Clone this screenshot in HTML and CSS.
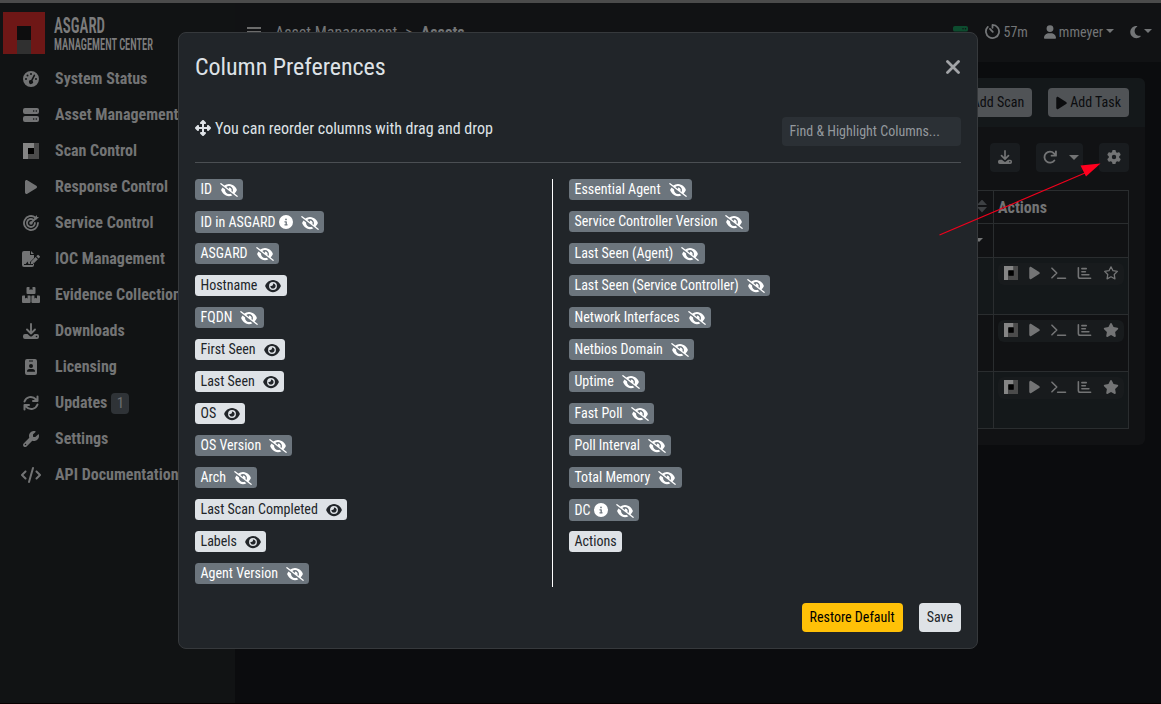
FILE: index.html
```html
<!DOCTYPE html>
<html lang="en">
<head>
<meta charset="utf-8">
<title>ASGARD Management Center</title>
<link rel="stylesheet" href="styles.css">
</head>
<body>
<svg class="sprite" aria-hidden="true">
  <symbol id="hide" viewBox="0 0 640 512"><path d="M38.8 5.1C28.4-3.1 13.3-1.2 5.1 9.2S-1.2 34.7 9.2 42.9l592 464c10.4 8.2 25.5 6.3 33.7-4.1s6.3-25.5-4.1-33.7L525.6 386.7c39.6-40.6 66.4-86.1 79.9-118.4c3.3-7.9 3.3-16.7 0-24.6c-14.9-35.7-46.2-87.7-93-131.1C465.5 68.8 400.8 32 320 32c-68.2 0-125 26.3-169.3 60.8L38.8 5.1zM223.1 149.5C248.6 126.2 282.7 112 320 112c79.5 0 144 64.5 144 144c0 24.9-6.3 48.3-17.4 68.7L408 294.5c8.4-19.3 10.6-41.4 4.8-63.3c-11.1-41.5-47.8-69.4-88.6-71.1c-5.8-.2-9.2 6.1-7.4 11.7c2.1 6.4 3.3 13.2 3.3 20.3c0 10.2-2.4 19.8-6.6 28.3l-90.3-70.8zM373 389.9c-16.4 6.5-34.3 10.1-53 10.1c-79.5 0-144-64.5-144-144c0-6.9 .5-13.6 1.4-20.2L83.1 161.5C60.3 191.2 44 220.8 34.5 243.7c-3.3 7.9-3.3 16.7 0 24.6c14.9 35.7 46.2 87.7 93 131.1C174.5 443.2 239.2 480 320 480c47.8 0 89.9-12.9 126.2-32.5L373 389.9z"/></symbol>
  <symbol id="show" viewBox="0 0 576 512"><path d="M288 32c-80.8 0-145.5 36.8-192.6 80.6C48.6 156 17.3 208 2.5 243.7c-3.3 7.9-3.3 16.7 0 24.6C17.3 304 48.6 356 95.4 399.4C142.5 443.2 207.2 480 288 480s145.5-36.8 192.6-80.6c46.8-43.5 78.1-95.4 93-131.1c3.3-7.9 3.3-16.7 0-24.6c-14.9-35.7-46.2-87.7-93-131.1C433.5 68.8 368.8 32 288 32zM144 256a144 144 0 1 1 288 0 144 144 0 1 1 -288 0zm144-64c0 35.3-28.7 64-64 64c-7.1 0-13.9-1.2-20.3-3.3c-5.5-1.8-11.9 1.6-11.7 7.4c.3 6.9 1.3 13.8 3.2 20.7c13.7 51.2 66.4 81.6 117.6 67.9s81.6-66.4 67.9-117.6c-11.1-41.5-47.8-69.4-88.6-71.1c-5.8-.2-9.2 6.1-7.4 11.7c2.1 6.4 3.3 13.2 3.3 20.3z"/></symbol>
  <symbol id="info" viewBox="0 0 512 512"><path d="M256 512A256 256 0 1 0 256 0a256 256 0 1 0 0 512zM216 336h24V272H216c-13.3 0-24-10.7-24-24s10.7-24 24-24h48c13.3 0 24 10.7 24 24v88h8c13.3 0 24 10.7 24 24s-10.7 24-24 24H216c-13.3 0-24-10.7-24-24s10.7-24 24-24zm40-208a32 32 0 1 1 0 64 32 32 0 1 1 0-64z"/></symbol>
  <symbol id="gear" viewBox="0 0 512 512"><path d="M495.9 166.6c3.2 8.7 .5 18.4-6.4 24.6l-43.3 39.4c1.1 8.3 1.7 16.8 1.7 25.4s-.6 17.1-1.7 25.4l43.3 39.4c6.9 6.2 9.6 15.9 6.4 24.6c-4.4 11.9-9.7 23.3-15.8 34.3l-4.7 8.1c-6.6 11-14 21.4-22.1 31.2c-5.9 7.2-15.7 9.6-24.5 6.8l-55.7-17.7c-13.4 10.3-28.2 18.9-44 25.4l-12.5 57.1c-2 9.1-9 16.3-18.2 17.8c-13.8 2.3-28 3.5-42.5 3.5s-28.7-1.2-42.5-3.5c-9.2-1.5-16.2-8.7-18.2-17.8l-12.5-57.1c-15.8-6.5-30.6-15.1-44-25.4L83.1 425.9c-8.8 2.8-18.6 .3-24.5-6.8c-8.1-9.8-15.5-20.2-22.1-31.2l-4.7-8.1c-6.1-11-11.4-22.4-15.8-34.3c-3.2-8.7-.5-18.4 6.4-24.6l43.3-39.4C64.6 273.1 64 264.6 64 256s.6-17.1 1.7-25.4L22.4 191.2c-6.9-6.2-9.6-15.9-6.4-24.6c4.4-11.9 9.7-23.3 15.8-34.3l4.7-8.1c6.6-11 14-21.4 22.1-31.2c5.9-7.2 15.7-9.6 24.5-6.8l55.7 17.7c13.4-10.3 28.2-18.9 44-25.4l12.5-57.1c2-9.1 9-16.3 18.2-17.8C227.3 1.2 241.5 0 256 0s28.7 1.2 42.5 3.5c9.2 1.5 16.2 8.7 18.2 17.8l12.5 57.1c15.8 6.5 30.6 15.1 44 25.4l55.7-17.7c8.8-2.8 18.6-.3 24.5 6.8c8.1 9.8 15.5 20.2 22.1 31.2l4.7 8.1c6.1 11 11.4 22.4 15.8 34.3zM256 336a80 80 0 1 0 0-160 80 80 0 1 0 0 160z"/></symbol>
  <symbol id="play" viewBox="0 0 384 512"><path d="M73 39c-14.8-9.1-33.4-9.4-48.5-.9S0 62.6 0 80V432c0 17.4 9.4 33.4 24.5 41.9s33.7 8.1 48.5-.9L361 297c14.3-8.7 23-24.2 23-41s-8.7-32.2-23-41L73 39z"/></symbol>
  <symbol id="star" viewBox="0 0 576 512"><path d="M316.9 18C311.6 7 300.4 0 288.1 0s-23.4 7-28.8 18L195 150.3 51.4 171.5c-12 1.8-22 10.2-25.7 21.7s-.7 24.2 7.9 32.7L137.8 329 113.2 474.7c-2 12 3 24.2 12.9 31.3s23 8 33.8 2.3l128.3-68.5 128.3 68.5c10.8 5.7 23.9 4.9 33.8-2.3s14.9-19.3 12.9-31.3L438.5 329 542.7 225.9c8.6-8.5 11.7-21.2 7.9-32.7s-13.7-19.9-25.7-21.7L381.2 150.3 316.9 18z"/></symbol>
  <symbol id="star-o" viewBox="0 0 576 512"><path d="M288 30L361 172 520 196 406 309 432 468 288 392 144 468 170 309 56 196 215 172z" fill="none" stroke="currentColor" stroke-width="48" stroke-linejoin="round"/></symbol>
  <symbol id="wrench" viewBox="0 0 512 512"><path d="M352 320c88.4 0 160-71.6 160-160c0-15.3-2.2-30.1-6.2-44.2c-3.1-10.8-16.4-13.2-24.3-5.3l-76.8 76.8c-3 3-7.1 4.7-11.3 4.7H336c-8.8 0-16-7.2-16-16V118.6c0-4.2 1.7-8.3 4.7-11.3l76.8-76.8c7.9-7.9 5.4-21.2-5.3-24.3C382.1 2.2 367.3 0 352 0C263.6 0 192 71.6 192 160c0 19.1 3.4 37.5 9.5 54.5L19.9 396.1C7.2 408.8 0 426.1 0 444.1C0 481.6 30.4 512 67.9 512c18 0 35.3-7.2 48-19.9L297.5 310.5c17 6.2 35.4 9.5 54.5 9.5zM80 408a24 24 0 1 1 0 48 24 24 0 1 1 0-48z"/></symbol>
  <symbol id="code" viewBox="0 0 640 512"><path d="M392.8 1.2c-17-4.9-34.7 5-39.6 22l-128 448c-4.9 17 5 34.7 22 39.6s34.7-5 39.6-22l128-448c4.9-17-5-34.7-22-39.6zm80.6 120.1c-12.5 12.5-12.5 32.8 0 45.3L562.7 256l-89.4 89.4c-12.5 12.5-12.5 32.8 0 45.3s32.8 12.5 45.3 0l112-112c12.5-12.5 12.5-32.8 0-45.3l-112-112c-12.5-12.5-32.8-12.5-45.3 0zm-306.7 0c-12.5-12.5-32.8-12.5-45.3 0l-112 112c-12.5 12.5-12.5 32.8 0 45.3l112 112c12.5 12.5 32.8 12.5 45.3 0s12.5-32.8 0-45.3L77.3 256l89.4-89.4c12.5-12.5 12.5-32.8 0-45.3z"/></symbol>
  <symbol id="user" viewBox="0 0 448 512"><path d="M224 256A128 128 0 1 0 224 0a128 128 0 1 0 0 256zm-45.7 48C79.8 304 0 383.8 0 482.3C0 498.7 13.3 512 29.7 512H418.3c16.4 0 29.7-13.3 29.7-29.7C448 383.8 368.2 304 269.7 304H178.3z"/></symbol>
  <symbol id="moon" viewBox="0 0 384 512"><path d="M223.5 32C100 32 0 132.3 0 256S100 480 223.5 480c60.6 0 115.5-24.2 155.8-63.4c5-4.9 6.3-12.5 3.1-18.7s-10.1-9.7-17-8.5c-9.8 1.7-19.8 2.6-30.1 2.6c-96.9 0-175.5-78.8-175.5-176c0-65.8 36-123.1 89.3-153.3c6.1-3.5 9.2-10.5 7.7-17.3s-7.3-11.9-14.3-12.5c-6.3-.5-12.6-.8-19-.8z"/></symbol>
  <symbol id="move" viewBox="0 0 512 512"><path d="M278.6 9.4c-12.5-12.5-32.8-12.5-45.3 0l-64 64c-9.2 9.2-11.9 22.9-6.9 34.9s16.6 19.8 29.6 19.8h32v96H128V192c0-12.9-7.8-24.6-19.8-29.6s-25.7-2.2-34.9 6.9l-64 64c-12.5 12.5-12.5 32.8 0 45.3l64 64c9.2 9.2 22.9 11.9 34.9 6.9s19.8-16.6 19.8-29.6V288h96v96H192c-12.9 0-24.6 7.8-29.6 19.8s-2.2 25.7 6.9 34.9l64 64c12.5 12.5 32.8 12.5 45.3 0l64-64c9.2-9.2 11.9-22.9 6.9-34.9s-16.6-19.8-29.6-19.8H288V288h96v32c0 12.9 7.8 24.6 19.8 29.6s25.7 2.2 34.9-6.9l64-64c12.5-12.5 12.5-32.8 0-45.3l-64-64c-9.2-9.2-22.9-11.9-34.9-6.9s-19.8 16.6-19.8 29.6v32H288V128h32c12.9 0 24.6-7.8 29.6-19.8s2.2-25.7-6.9-34.9l-64-64z"/></symbol>
  <symbol id="gauge" viewBox="0 0 16 16"><path fill-rule="evenodd" d="M8 0a8 8 0 1 1 0 16A8 8 0 0 1 8 0zM8 2a1 1 0 1 0 0 2 1 1 0 0 0 0-2zM4.5 3.5a1 1 0 1 0 0 2 1 1 0 0 0 0-2zM3 7a1 1 0 1 0 0 2 1 1 0 0 0 0-2zM13 7a1 1 0 1 0 0 2 1 1 0 0 0 0-2zM10.8 3.7L8.1 9A2 2 0 1 0 9.5 9.7L12.2 4.4Q11.8 3 10.8 3.7z"/></symbol>
  <symbol id="server" viewBox="0 0 16 16"><path fill-rule="evenodd" d="M2 1h12a2 2 0 0 1 2 2v2a2 2 0 0 1-2 2H2a2 2 0 0 1-2-2V3a2 2 0 0 1 2-2zM10.7 3.2a.8.8 0 1 0 0 1.6.8.8 0 0 0 0-1.6zM13.3 3.2a.8.8 0 1 0 0 1.6.8.8 0 0 0 0-1.6zM2 9h12a2 2 0 0 1 2 2v2a2 2 0 0 1-2 2H2a2 2 0 0 1-2-2v-2a2 2 0 0 1 2-2zM10.7 11.2a.8.8 0 1 0 0 1.6.8.8 0 0 0 0-1.6zM13.3 11.2a.8.8 0 1 0 0 1.6.8.8 0 0 0 0-1.6z"/></symbol>
  <symbol id="scan" viewBox="0 0 16 16"><path d="M0 0h11v5H5v11H0z" fill="#858585"/><path d="M11 0h5v16H5v-5h6z" fill="#4b4b4b"/><path d="M5 5h6v6H5z" fill="#000"/></symbol>
  <symbol id="target" viewBox="0 0 16 16"><g fill="none" stroke="currentColor" stroke-width="1.8" stroke-linecap="round"><path d="M12.3 2.5A7 7 0 1 0 15 8"/><path d="M10 4.6A4 4 0 1 0 11.9 8"/><path d="M8 8l5-5"/></g><circle cx="8" cy="8" r="1.7"/><path d="M11.5 2.5L14 0v2h2l-2.5 2.5h-2z"/></symbol>
  <symbol id="sign" viewBox="0 0 18 16"><path fill-rule="evenodd" d="M2 0h6v4h4v3L8 11v2H6.500l-1-2.500L3.800 13H2v1h9v-1.500l1-1V14a2 2 0 0 1-2 2H2a2 2 0 0 1-2-2V2a2 2 0 0 1 2-2zM9 0l3 3H9zM15.300 4.200q.7-.7 1.400 0l.9.9q.7.7 0 1.400l-1 1-2.300-2.300zM13.600 5.900l2.300 2.300-4.500 4.500-2.800.6.600-2.900z"/></symbol>
  <symbol id="boxes" viewBox="0 0 18 16"><path d="M5.500 0h2v3l1.500-.8 1.500.8V0h2A1 1 0 0 1 13.500 1v5a1 1 0 0 1-1 1h-7a1 1 0 0 1-1-1V1a1 1 0 0 1 1-1zM1 8.500h2v3l1.300-.8 1.300.8v-3h2a1 1 0 0 1 1 1V15a1 1 0 0 1-1 1H1a1 1 0 0 1-1-1V9.500a1 1 0 0 1 1-1zM10.400 8.500h2v3l1.300-.8 1.300.8v-3h2a1 1 0 0 1 1 1V15a1 1 0 0 1-1 1h-6.600a1 1 0 0 1-1-1V9.500a1 1 0 0 1 1-1z"/></symbol>
  <symbol id="down" viewBox="0 0 16 16"><path d="M8 1v9M4 6.500l4 4 4-4" fill="none" stroke="currentColor" stroke-width="1.900" stroke-linecap="round" stroke-linejoin="round"/><path fill-rule="evenodd" d="M2 11h2.500L7 13.200q1 .8 2 0L11.500 11H14a2 2 0 0 1 2 2v1a2 2 0 0 1-2 2H2a2 2 0 0 1-2-2v-1a2 2 0 0 1 2-2zM13.500 12.700a.8.8 0 1 0 0 1.600.8.8 0 0 0 0-1.600z"/></symbol>
  <symbol id="badge" viewBox="0 0 12 16"><path fill-rule="evenodd" d="M2 0h8a2 2 0 0 1 2 2v12a2 2 0 0 1-2 2H2a2 2 0 0 1-2-2V2a2 2 0 0 1 2-2zM4 1.500v1h4v-1zM6 5a2 2 0 1 0 0 4 2 2 0 0 0 0-4zM4.800 10A2.700 2.700 0 0 0 2 12.800h8A2.700 2.700 0 0 0 7.200 10z"/></symbol>
  <symbol id="sync" viewBox="0 0 16 16"><g fill="none" stroke="currentColor" stroke-width="2" stroke-linecap="round" stroke-linejoin="round"><path d="M1.500 6.500C3 2 9 0 13 4.500M14.500 9.500C13 14 7 16 3 11.500M14.500 1.500v4.500H10M1.500 14.500V10H6"/></g></symbol>
  <symbol id="redo" viewBox="0 0 16 16"><path d="M13 12A6.300 6.300 0 1 1 12.500 3.800L14.500 6M14.800 1.500v5h-5" fill="none" stroke="currentColor" stroke-width="2.100" stroke-linecap="round" stroke-linejoin="round"/></symbol>
  <symbol id="timer" viewBox="0 0 16 16"><path d="M8 1v3M8 1A7 7 0 1 1 3 3.100M5.300 5.300L8.300 8.300" fill="none" stroke="currentColor" stroke-width="1.900" stroke-linecap="round"/></symbol>
  <symbol id="term" viewBox="0 0 18 16"><path d="M1.500 2.500L7 8l-5.500 5.500M8 14h9" fill="none" stroke="currentColor" stroke-width="1.800" stroke-linecap="round" stroke-linejoin="round"/></symbol>
  <symbol id="chart" viewBox="0 0 16 16"><path d="M1 2v10q0 2 2 2h12M5 3h5M5 6.500h4M5 10h8" fill="none" stroke="currentColor" stroke-width="1.800" stroke-linecap="round"/></symbol>
</svg>

<div class="topline"></div>
<div class="app">
  <aside class="side">
    <div class="brand">
      <svg class="mark" viewBox="0 0 42 42"><path fill="#6e1716" d="M0 0h42v42H28V14H14v28H0z"/><path fill="#0d0d0e" d="M14 14h14v14H14z"/><path fill="#303030" d="M14 28h14v14H14z"/></svg>
      <svg class="word" viewBox="0 0 110 42"><text class="w1" x="1" y="21" textLength="51" lengthAdjust="spacingAndGlyphs">ASGARD</text><text class="w2" x="1" y="37.700" textLength="99" lengthAdjust="spacingAndGlyphs">MANAGEMENT CENTER</text></svg>
    </div>
    <nav class="nav">
      <a><i><svg width="16" height="16"><use href="#gauge"/></svg></i>System Status</a>
      <a><i><svg width="16" height="16"><use href="#server"/></svg></i>Asset Management</a>
      <a><i><svg width="16" height="16"><use href="#scan"/></svg></i>Scan Control</a>
      <a><i><svg width="12" height="16"><use href="#play"/></svg></i>Response Control</a>
      <a><i><svg width="16" height="16"><use href="#target"/></svg></i>Service Control</a>
      <a><i><svg width="18" height="16"><use href="#sign"/></svg></i>IOC Management</a>
      <a><i><svg width="18" height="16"><use href="#boxes"/></svg></i>Evidence Collection</a>
      <a><i><svg width="16" height="16"><use href="#down"/></svg></i>Downloads</a>
      <a><i><svg width="12" height="16"><use href="#badge"/></svg></i>Licensing</a>
      <a><i><svg width="16" height="16"><use href="#sync"/></svg></i>Updates<b class="count">1</b></a>
      <a><i><svg width="16" height="16"><use href="#wrench"/></svg></i>Settings</a>
      <a><i><svg width="20" height="16"><use href="#code"/></svg></i>API Documentation</a>
    </nav>
  </aside>
  <main class="main">
    <header class="bar">
      <span class="burger"></span>
      <span class="crumb">Asset Management</span><span class="sep">&gt;</span><b class="crumb">Assets</b>
      <div class="tools">
        <svg class="green" width="15" height="15"><use href="#server"/></svg>
        <span class="tool t-time"><svg width="15" height="15"><use href="#timer"/></svg>57m</span>
        <span class="tool t-user"><svg width="12" height="14"><use href="#user"/></svg>mmeyer<em class="caret"></em></span>
        <span class="tool t-moon"><svg width="11" height="14"><use href="#moon"/></svg><em class="caret"></em></span>
      </div>
    </header>
    <section class="card">
      <div class="card-head"><button class="btn grey">Add Scan</button><button class="btn grey"><svg width="11" height="14"><use href="#play"/></svg>Add Task</button></div>
      <div class="card-body">
        <div class="actions">
          <span class="sq"><svg width="14" height="14"><use href="#down"/></svg></span>
          <span class="sq wide"><svg width="14" height="14"><use href="#redo"/></svg><em class="caret"></em></span>
          <span class="sq"><svg width="14" height="14"><use href="#gear"/></svg></span>
        </div>
        <div class="table">
          <div class="row head"><div class="cell"><span class="sort"></span></div><div class="cell">Actions</div></div>
          <div class="row filter"><div class="cell"><em class="caret"></em></div><div class="cell"></div></div>
          <div class="row alt"><div class="cell"></div><div class="cell"><div class="ops"><svg width="14" height="14"><use href="#scan"/></svg><svg width="11" height="14"><use href="#play"/></svg><svg width="17" height="14"><use href="#term"/></svg><svg class="ch" width="15" height="14"><use href="#chart"/></svg><svg width="16" height="14"><use href="#star-o"/></svg></div></div></div>
          <div class="row"><div class="cell"></div><div class="cell"><div class="ops"><svg width="14" height="14"><use href="#scan"/></svg><svg width="11" height="14"><use href="#play"/></svg><svg width="17" height="14"><use href="#term"/></svg><svg class="ch" width="15" height="14"><use href="#chart"/></svg><svg width="16" height="14"><use href="#star"/></svg></div></div></div>
          <div class="row alt"><div class="cell"></div><div class="cell"><div class="ops"><svg width="14" height="14"><use href="#scan"/></svg><svg width="11" height="14"><use href="#play"/></svg><svg width="17" height="14"><use href="#term"/></svg><svg class="ch" width="15" height="14"><use href="#chart"/></svg><svg width="16" height="14"><use href="#star"/></svg></div></div></div>
        </div>
      </div>
    </section>
  </main>
</div>

<div class="modal">
  <div class="m-head"><h1>Column Preferences</h1><svg width="14" height="14" viewBox="0 0 14 14"><path d="M1.500 1.500l11 11M12.500 1.500l-11 11" stroke="#a2a4a7" stroke-width="2.800" stroke-linecap="round"/></svg></div>
  <div class="m-sub"><p><svg width="16" height="16"><use href="#move"/></svg>You can reorder columns with drag and drop</p><div class="find">Find &amp; Highlight Columns...</div></div>
  <div class="cols">
    <div class="col">
      <div class="slot"><span class="pill off">ID<svg class="eye" width="18" height="14"><use href="#hide"/></svg></span></div>
      <div class="slot"><span class="pill off tall">ID in ASGARD<svg class="inf" width="14" height="14"><use href="#info"/></svg><svg class="eye" width="18" height="14"><use href="#hide"/></svg></span></div>
      <div class="slot"><span class="pill off">ASGARD<svg class="eye" width="18" height="14"><use href="#hide"/></svg></span></div>
      <div class="slot"><span class="pill">Hostname<svg class="eye" width="16" height="14"><use href="#show"/></svg></span></div>
      <div class="slot"><span class="pill off">FQDN<svg class="eye" width="18" height="14"><use href="#hide"/></svg></span></div>
      <div class="slot"><span class="pill">First Seen<svg class="eye" width="16" height="14"><use href="#show"/></svg></span></div>
      <div class="slot"><span class="pill">Last Seen<svg class="eye" width="16" height="14"><use href="#show"/></svg></span></div>
      <div class="slot"><span class="pill">OS<svg class="eye" width="16" height="14"><use href="#show"/></svg></span></div>
      <div class="slot"><span class="pill off">OS Version<svg class="eye" width="18" height="14"><use href="#hide"/></svg></span></div>
      <div class="slot"><span class="pill off">Arch<svg class="eye" width="18" height="14"><use href="#hide"/></svg></span></div>
      <div class="slot"><span class="pill">Last Scan Completed<svg class="eye" width="16" height="14"><use href="#show"/></svg></span></div>
      <div class="slot"><span class="pill">Labels<svg class="eye" width="16" height="14"><use href="#show"/></svg></span></div>
      <div class="slot"><span class="pill off">Agent Version<svg class="eye" width="18" height="14"><use href="#hide"/></svg></span></div>
    </div>
    <div class="col second">
      <div class="slot"><span class="pill off">Essential Agent<svg class="eye" width="18" height="14"><use href="#hide"/></svg></span></div>
      <div class="slot"><span class="pill off">Service Controller Version<svg class="eye" width="18" height="14"><use href="#hide"/></svg></span></div>
      <div class="slot"><span class="pill off">Last Seen (Agent)<svg class="eye" width="18" height="14"><use href="#hide"/></svg></span></div>
      <div class="slot"><span class="pill off">Last Seen (Service Controller)<svg class="eye" width="18" height="14"><use href="#hide"/></svg></span></div>
      <div class="slot"><span class="pill off">Network Interfaces<svg class="eye" width="18" height="14"><use href="#hide"/></svg></span></div>
      <div class="slot"><span class="pill off">Netbios Domain<svg class="eye" width="18" height="14"><use href="#hide"/></svg></span></div>
      <div class="slot"><span class="pill off">Uptime<svg class="eye" width="18" height="14"><use href="#hide"/></svg></span></div>
      <div class="slot"><span class="pill off">Fast Poll<svg class="eye" width="18" height="14"><use href="#hide"/></svg></span></div>
      <div class="slot"><span class="pill off">Poll Interval<svg class="eye" width="18" height="14"><use href="#hide"/></svg></span></div>
      <div class="slot"><span class="pill off">Total Memory<svg class="eye" width="18" height="14"><use href="#hide"/></svg></span></div>
      <div class="slot"><span class="pill off tall">DC<svg class="inf" width="14" height="14"><use href="#info"/></svg><svg class="eye" width="18" height="14"><use href="#hide"/></svg></span></div>
      <div class="slot"><span class="pill">Actions</span></div>
    </div>
  </div>
  <div class="m-foot"><button class="btn gold">Restore Default</button><button class="btn light">Save</button></div>
</div>

<svg class="pointer" width="170" height="80" viewBox="0 0 170 80"><path d="M4.500 75L150 13" stroke="#f0001c" stroke-width="1.200"/><path d="M165.500 3.500L145.500 5.500L151 16.500z" fill="#ff001e"/></svg>
</body>
</html>
```
FILE: styles.css
```css
* { box-sizing: border-box; }
html, body { margin: 0; height: 704px; overflow: hidden; }
body {
  background: #0b0c0e;
  color: #dee2e6;
  font-family: "Roboto Condensed", Roboto, sans-serif;
  font-stretch: 75%;
  font-size: 16px;
  line-height: 24px;
}
svg { display: block; flex: none; fill: currentColor; }
.sprite { position: absolute; width: 0; height: 0; }
h1, p { margin: 0; font-weight: 400; }
button { font: inherit; border: 0; }

.topline { height: 3px; background: #4b4b4b; }
.app { display: flex; height: 701px; border-bottom: 1px solid #080000; }
.side { width: 235px; background: #111314; color: #737475; }
.brand { display: flex; gap: 8px; padding: 9px 0 0 3px; }
.mark { width: 42px; height: 42px; }
.word { width: 110px; height: 42px; overflow: visible; fill: #7c7c7c; font-weight: 600; }
.w1 { font-size: 22px; }
.w2 { font-size: 16.5px; }
.nav { display: flex; flex-direction: column; padding-top: 7px; font-weight: 700; }
.nav a { display: flex; align-items: center; height: 36px; padding-left: 20px; white-space: nowrap; }
.nav i { display: flex; justify-content: center; width: 22px; margin: 0 13px 1px 0; }
.count { width: 18px; height: 21px; margin: 1px 0 0 4px; border-radius: 4px; background: #2f3337; color: #6b6e70; font-weight: 400; font-size: 15px; line-height: 21px; text-align: center; }

.main { flex: 1; }
.bar { display: flex; align-items: center; height: 59px; padding: 0 9px 0 12px; background: #111214; color: #737577; }
.burger { width: 14px; height: 11px; margin-right: 14px; border: solid #6b6b6b; border-width: 2px 0; background: linear-gradient(#6b6b6b, #6b6b6b) 0 2px / 14px 2px no-repeat; }
.sep { margin: 0 8px; }
.tools { display: flex; align-items: center; margin: 0 0 2px auto; font-size: 14px; }
.green { margin: 1px 17px 0 0; color: #0d4c2f; }
.tool { display: flex; align-items: center; gap: 3px; }
.t-time, .t-user { margin-right: 16px; }
.caret { border: 4px solid transparent; border-top-color: currentColor; border-bottom: 0; margin-bottom: 2px; }

.card { margin: 16px 16px 0; height: 367px; border-radius: 6px; background: #111214; overflow: hidden; }
.card-head { display: flex; justify-content: flex-end; gap: 16px; height: 49px; padding: 10px 16px; background: #14181a; }
.btn { display: flex; align-items: center; gap: 3px; height: 29px; padding: 0 8px; border-radius: 4px; font-size: 14px; line-height: 29px; }
.grey { background: #505356; color: #0b0c0e; }
.card-body { padding: 16px; }
.actions { display: flex; justify-content: flex-end; gap: 16px; color: #737475; }
.sq { display: flex; align-items: center; justify-content: center; width: 30px; height: 29px; padding-bottom: 1px; border-radius: 4px; background: #191c1f; }
.wide { width: 47px; gap: 12px; padding-left: 3px; }
.wide .caret { border-width: 5px 5px 0; margin: 1px 0 0; }
.table { margin-top: 18px; border: 1px solid #2a2d2f; border-bottom: 0; color: #737475; }
.row { display: grid; grid-template-columns: 1fr 135px; height: 57px; border-bottom: 1px solid #2a2d2f; }
.cell + .cell { border-left: 1px solid #2a2d2f; padding: 5px 4px; }
.head { height: 33px; font-weight: 700; }
.filter { height: 34px; }
.alt { background: #14181a; }
.head .cell:first-child, .filter .cell:first-child { display: flex; align-items: center; justify-content: flex-end; padding-right: 6px; }
.filter .cell:first-child { padding-right: 10px; }
.head .cell + .cell { padding: 5px 4px 3px; }
.sort { width: 10px; height: 13px; margin-top: -2px; background: #3d4043; clip-path: polygon(50% 0, 100% 42%, 0 42%, 50% 0, 50% 100%, 0 58%, 100% 58%, 50% 100%); }
.ops { display: flex; align-items: center; height: 22px; width: 126px; padding: 0 5px 2px 6px; justify-content: space-between; border-radius: 6px; background: #181b1d; }
.ch { margin: 0 1px 0 -1px; }

.modal { position: absolute; left: 178px; top: 32px; width: 800px; height: 617px; padding: 0 16px; border: 1px solid #36393c; border-radius: 8px; background: #212529; }
.m-head { display: flex; align-items: center; justify-content: space-between; height: 68px; padding-right: 1px; }
.m-head h1 { font-size: 24px; line-height: 30px; letter-spacing: -.04px; }
.m-sub { display: flex; align-items: center; justify-content: space-between; height: 62px; border-bottom: 1px solid #4b4f53; }
.m-sub p { display: flex; align-items: center; gap: 4px; margin-top: -6px; }
.m-sub svg { margin-bottom: 2px; }
.find { width: 179px; height: 29px; padding: 0 7.5px; border-radius: 4px; background: #2b3035; color: #94999e; font-size: 14px; line-height: 28px; }
.cols { display: grid; grid-template: 408px / 357px 1fr; height: 408px; margin-top: 16px; }
.second { border-left: 1px solid #fff; padding-left: 16px; }
.slot { display: flex; align-items: flex-start; height: 32px; }
.pill { display: flex; align-items: center; height: 21px; padding: 0 5.2px 1px 5.5px; border-radius: 3.5px; background: #dee2e6; color: #212529; font-size: 14px; line-height: 20px; white-space: nowrap; }
.off { background: #6c757d; color: #fff; }
.tall { height: 22px; }
.eye { margin-left: 8px; margin-top: 2px; }
.inf { margin-left: 3.5px; margin-top: 1px; }
.m-foot { display: flex; justify-content: flex-end; gap: 16px; margin-top: 16px; }
.gold { background: #ffc107; color: #000; }
.light { background: #dee2e6; color: #212529; }
.pointer { position: absolute; left: 935px; top: 160px; }
```
